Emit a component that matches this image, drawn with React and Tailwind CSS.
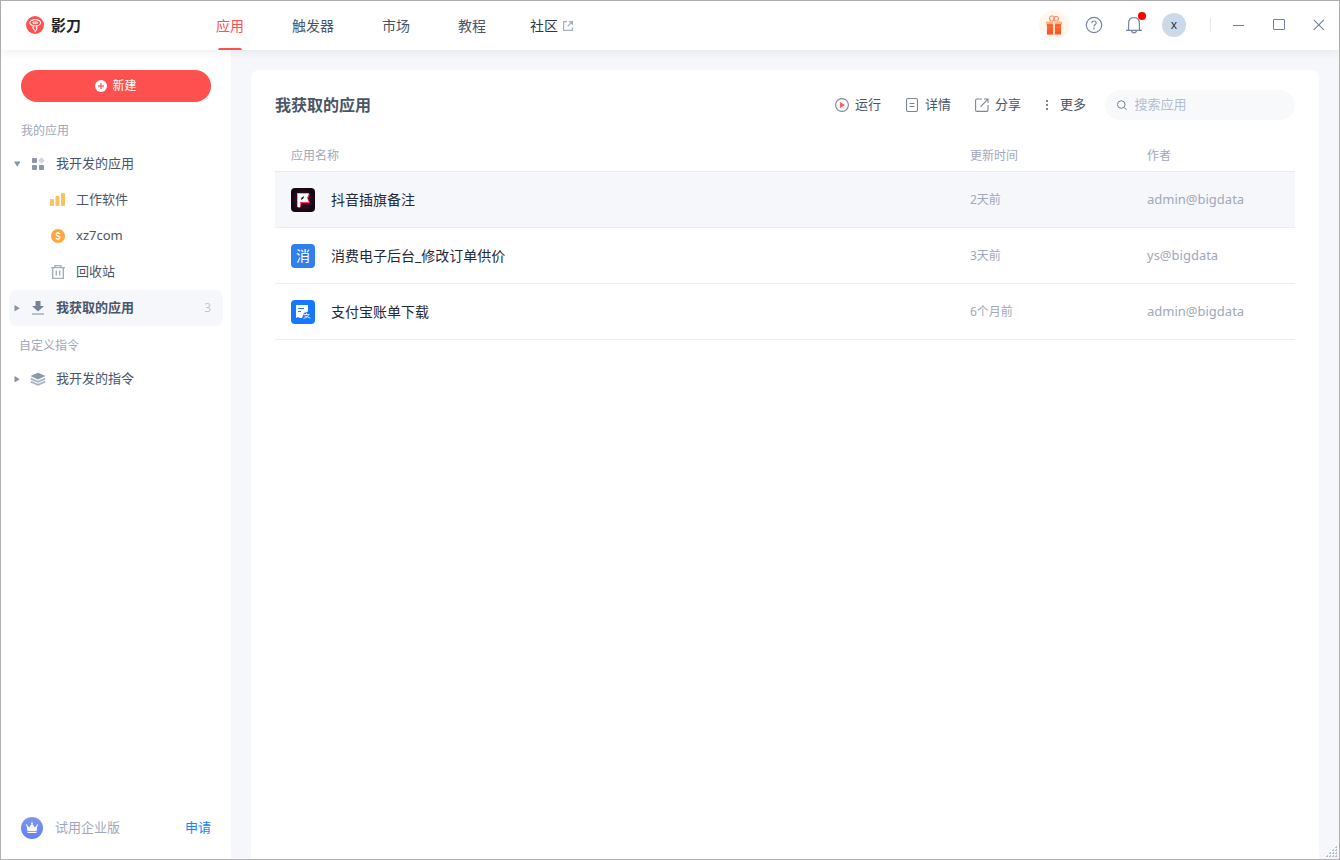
import { useState } from "react";

const navItems = ["应用", "触发器", "市场", "教程"];

const apps = [
  { name: "抖音插旗备注", updated: "2天前", author: "admin@bigdata", Icon: FlagAppIcon },
  { name: "消费电子后台_修改订单供价", updated: "3天前", author: "ys@bigdata", Icon: TextAppIcon },
  { name: "支付宝账单下载", updated: "6个月前", author: "admin@bigdata", Icon: BillAppIcon },
];

function LogoIcon() {
  return (
    <svg width="18" height="18" viewBox="0 0 18 18" fill="none">
      <circle cx="9" cy="9" r="9" fill="#ff4f4f" />
      <ellipse cx="9.2" cy="6.800" rx="5.400" ry="3.200" stroke="#fff" strokeWidth="1.100" />
      <rect x="6.800" y="6" width="4.800" height="1.600" rx=".8" fill="#ff8a8a" stroke="#fff" strokeWidth=".9" />
      <path d="M7 10v1.800c0 1 1 1.300 1.400 2.200M10.900 10.200c.3 2-.4 4-1.800 5.400" stroke="#fff" strokeWidth="1.200" strokeLinecap="round" />
    </svg>
  );
}

function ExternalIcon() {
  return (
    <svg width="10" height="10" viewBox="0 0 10 10" fill="none" stroke="#a3afc2" strokeWidth="1.300">
      <path d="M4 .6H.6v8.800h8.800V6.500M6 .6h3.400V4M9.200.8 4.600 5.400" />
    </svg>
  );
}

function GiftIcon() {
  return (
    <svg width="16" height="20" viewBox="0 0 16 20" fill="none">
      <defs>
        <linearGradient id="giftBox" x1="0" y1="0" x2="0" y2="1">
          <stop offset="0" stopColor="#ff7a3d" />
          <stop offset="1" stopColor="#ff4a1f" />
        </linearGradient>
      </defs>
      <rect x="3.600" y="1" width="4.600" height="5" rx="2" stroke="#ff8b66" strokeWidth="1.200" />
      <rect x="7.800" y="1.500" width="4.600" height="4.500" rx="2" stroke="#ff8b66" strokeWidth="1.200" />
      <rect x="1" y="8" width="14" height="11.500" fill="url(#giftBox)" />
      <rect x="0" y="6.500" width="16" height="3" rx=".5" fill="#ffb27a" />
      <rect x="1" y="9.500" width="14" height="1" fill="#f5401a" />
      <rect x="7" y="6.500" width="2" height="13" fill="#ffe3c7" />
    </svg>
  );
}

function HelpIcon() {
  return (
    <svg width="18" height="18" viewBox="0 0 18 18" fill="none" stroke="#7485a0" strokeWidth="1.200">
      <circle cx="9" cy="9" r="7.700" />
      <path d="M6.800 7.200c0-1.300.9-2.200 2.200-2.200s2.200.8 2.200 2c0 1.500-2.200 1.600-2.200 3.400" />
      <circle cx="9" cy="12.500" r=".3" />
    </svg>
  );
}

function BellIcon() {
  return (
    <svg width="16" height="18" viewBox="0 0 16 18" fill="none" stroke="#7485a0" strokeWidth="1.200">
      <path d="M2.600 14.200V7.400C2.600 3.800 4.800 1.600 8 1.600s5.400 2.200 5.400 5.800v6.800M0 14.400h16M5.600 14.600c.2 1.400 1.100 2.200 2.400 2.200s2.200-.8 2.400-2.200" />
    </svg>
  );
}

function MinimizeIcon() {
  return (
    <svg width="12" height="12" viewBox="0 0 12 12" stroke="#6f819b">
      <path d="M0 6.500h11" />
    </svg>
  );
}

function MaximizeIcon() {
  return (
    <svg width="12" height="12" viewBox="0 0 12 12" fill="none" stroke="#6f819b">
      <rect x=".5" y=".5" width="11" height="10" rx=".5" />
    </svg>
  );
}

function CloseIcon() {
  return (
    <svg width="12" height="12" viewBox="0 0 12 12" stroke="#6f819b" strokeWidth="1.100">
      <path d="M.8.8l10 10M10.800.8l-10 10" />
    </svg>
  );
}

function PlusIcon() {
  return (
    <svg width="12" height="12" viewBox="0 0 12 12">
      <circle cx="6" cy="6" r="6" fill="#fff" />
      <path d="M6 3v6M3 6h6" stroke="#ff6a6a" strokeWidth="1.300" />
    </svg>
  );
}

function Arrow({ open }) {
  return (
    <svg className="shrink-0" width="6" height="6" viewBox="0 0 6 6" fill="#8593a8">
      {open ? <path d="M0 .5h6.500L3.200 5.800z" /> : <path d="M.5 0v6.500l5.300-3.200z" />}
    </svg>
  );
}

function GridIcon() {
  return (
    <svg width="14" height="14" viewBox="0 0 14 14" fill="#8a98ad">
      <rect x="1" y="1" width="5" height="5" rx="1" />
      <rect x="1" y="8" width="5" height="5" rx="1" />
      <rect x="8" y="8" width="5" height="5" rx="1" />
      <path d="M10.500.2l3.300 3.300-3.300 3.300-3.300-3.300z" fill="#d0d6e0" />
    </svg>
  );
}

function BarsIcon() {
  return (
    <svg width="16" height="16" viewBox="0 0 16 16" fill="#f9c263">
      <rect x="0" y="7" width="4" height="7" rx=".8" />
      <rect x="5.500" y="4" width="4" height="10" rx=".8" />
      <rect x="11" y="1" width="4" height="13" rx=".8" />
    </svg>
  );
}

function CoinIcon() {
  return (
    <svg width="16" height="16" viewBox="0 0 16 16" fill="none">
      <circle cx="8" cy="8" r="7" fill="#ffa63f" />
      <path d="M10 6.200C9.800 5.300 9 5 8 5s-1.900.4-1.900 1.400C6.100 8.500 10 7.500 10 9.600c0 1-.9 1.500-2 1.500s-1.900-.5-2-1.400M8 4v1M8 11v1.200" stroke="#fff" strokeWidth="1.300" />
    </svg>
  );
}

function TrashIcon() {
  return (
    <svg width="16" height="16" viewBox="0 0 16 16" fill="none" stroke="#a4adb9" strokeWidth="1.400">
      <path d="M1 3.600h14M5 3.400V1.600h6v1.800M2.700 3.600v10.800h10.600V3.600M6.300 6.500v5M9.700 6.500v5" />
    </svg>
  );
}

function DownloadIcon() {
  return (
    <svg width="14" height="14" viewBox="0 0 14 14">
      <path d="M4.500 0h5v5H13l-6 5.500L1 5h3.500z" fill="#74839a" />
      <rect x="1" y="12" width="12" height="2" fill="#b7c0cd" />
    </svg>
  );
}

function LayersIcon() {
  return (
    <svg width="16" height="14" viewBox="0 0 16 14">
      <path d="M8 .8l7.500 3.300L8 7.500.5 4.100z" fill="#8a98ad" />
      <path d="M.8 6.600L8 9.800l7.200-3.200M.8 9.600L8 12.800l7.200-3.200" fill="none" stroke="#a7b2c2" strokeWidth="1.700" />
    </svg>
  );
}

function CrownIcon() {
  return (
    <svg width="22" height="22" viewBox="0 0 22 22">
      <defs>
        <linearGradient id="crown" x1="0" y1="0" x2="0" y2="1">
          <stop offset="0" stopColor="#7d96ef" />
          <stop offset="1" stopColor="#6480f4" />
        </linearGradient>
      </defs>
      <circle cx="11" cy="11" r="11" fill="url(#crown)" />
      <path d="M5.500 8l2.900 2.300L11 6.200l2.600 4.100L16.500 8l-.9 6H6.400z" fill="#fff" />
      <rect x="6.500" y="14.800" width="9" height="1.200" fill="#fff" />
      <circle cx="11" cy="6.200" r=".9" fill="#fff" />
      <circle cx="5.600" cy="8" r=".8" fill="#fff" />
      <circle cx="16.400" cy="8" r=".8" fill="#fff" />
    </svg>
  );
}

function RunIcon() {
  return (
    <svg width="14" height="14" viewBox="0 0 14 14" fill="none">
      <circle cx="7" cy="7" r="6.400" stroke="#7d8696" strokeWidth="1.100" />
      <path d="M5 4v6l5-3z" fill="#ff5a5f" />
    </svg>
  );
}

function DetailIcon() {
  return (
    <svg width="14" height="14" viewBox="0 0 14 14" fill="none" stroke="#7d8696" strokeWidth="1.100">
      <rect x="1.500" y=".5" width="11" height="13" rx="1.500" />
      <path d="M4.500 5.500h5M4.500 8.500h5" />
    </svg>
  );
}

function ShareIcon() {
  return (
    <svg width="14" height="14" viewBox="0 0 14 14" fill="none" stroke="#7d8696" strokeWidth="1.100">
      <path d="M7 1H2a1.400 1.400 0 0 0-1.400 1.400v9.600A1.400 1.400 0 0 0 2 13.400h9.600A1.400 1.400 0 0 0 13 12V7M9 1h4v4M12.800 1.200 5.500 8.800" />
    </svg>
  );
}

function MoreIcon() {
  return (
    <svg width="9" height="14" viewBox="0 0 9 14" fill="#7d8696">
      <path d="M1 2h2v2H1zM1 6h2v2H1zM1 10h2v2H1z" />
    </svg>
  );
}

function SearchIcon() {
  return (
    <svg width="13" height="13" viewBox="0 0 13 13" fill="none" stroke="#6b7a90" strokeWidth="1.200">
      <circle cx="5.300" cy="5.300" r="4.700" />
      <path d="M8.800 8.800l3.200 3.200" />
    </svg>
  );
}

function FlagAppIcon() {
  return (
    <svg className="shrink-0" width="24" height="24" viewBox="0 0 24 24">
      <defs>
        <radialGradient id="flagBg">
          <stop offset="0" stopColor="#4a1030" />
          <stop offset="1" stopColor="#150714" />
        </radialGradient>
      </defs>
      <rect width="24" height="24" rx="4" fill="url(#flagBg)" />
      <path d="M7 6h12l-2 4.500 2 4.500h-8.500L9 20H7z" fill="#ff2c55" />
      <path d="M6 5h12l-1.500 4h-3L9 14v5H6z" fill="#35d5d8" />
      <path d="M6.800 5.800h11l-1.800 4 1.800 4.200H9.200v5H6.800z" fill="#fff" />
      <path d="M9.800 12l.8-2.600L13.200 8l-1 2.800z" fill="#2a0a1e" />
    </svg>
  );
}

function TextAppIcon() {
  return (
    <span className="flex size-6 shrink-0 items-center justify-center rounded-sm bg-[#2f80ed] text-sm leading-6 text-white">
      消
    </span>
  );
}

function BillAppIcon() {
  return (
    <svg className="shrink-0" width="24" height="24" viewBox="0 0 24 24" fill="none">
      <rect width="24" height="24" rx="4" fill="#1677ff" />
      <path d="M5 5h12v6.500l-4 1.500-2 5H9l-2-1-2 1z" fill="#fff" />
      <path d="M7 8.500h6M7 11.500h3" stroke="#1677ff" strokeWidth="1.200" />
      <path d="M12.500 14.500h6M15.500 12.800v1.700M17.500 14.800c-.5 2-2.500 3.400-5 3.400M13.500 16c2 .3 4 1.400 6 2.200" stroke="#d6e6ff" />
    </svg>
  );
}

function Header() {
  return (
    <header className="relative z-10 flex h-[49px] shrink-0 bg-white shadow-[0_2px_10px_rgba(0,0,0,0.07)]">
      <div className="flex w-[215px] shrink-0 items-center gap-[7px] pb-px pl-[25px] text-[15px] font-bold text-[#1f2329]">
        <LogoIcon />
        影刀
      </div>
      <nav className="flex gap-12 text-sm text-[#4a5568]">
        {navItems.map((item, i) => (
          <a
            key={item}
            href="#"
            className={i === 0 ? "relative flex items-center text-[#ff4f4f]" : "flex items-center"}
          >
            {item}
            {i === 0 && <span className="absolute inset-x-[2px] bottom-0 h-[2px] rounded-t-sm bg-[#ff4f4f]" />}
          </a>
        ))}
        <a href="#" className="-ml-1 flex items-center gap-[5px] text-[#2d3748]">
          社区
          <ExternalIcon />
        </a>
      </nav>
      <div className="ml-auto flex items-center pb-px">
        <button aria-label="礼物" className="flex w-10 justify-center">
          <span className="flex size-[30px] items-center justify-center rounded-full bg-[#fff6ec]">
            <GiftIcon />
          </span>
        </button>
        <button aria-label="帮助" className="flex w-10 justify-center">
          <HelpIcon />
        </button>
        <button aria-label="通知" className="relative flex w-10 justify-center">
          <BellIcon />
          <span className="absolute -top-1 right-2 size-2 rounded-full bg-[#ff0000]" />
        </button>
        <button className="flex w-10 justify-center">
          <span className="flex size-6 items-center justify-center rounded-full bg-[#cbd9e8] text-xs leading-6 text-[#2d3748]">
            x
          </span>
        </button>
        <span className="mr-2 ml-4 h-[14px] w-px bg-[#e2e6ee]" />
        <button aria-label="最小化" className="flex w-10 justify-center">
          <MinimizeIcon />
        </button>
        <button aria-label="最大化" className="flex w-10 justify-center">
          <MaximizeIcon />
        </button>
        <button aria-label="关闭" className="flex w-10 justify-center">
          <CloseIcon />
        </button>
      </div>
    </header>
  );
}

function TreeItem({ icon, label, open, active, count }) {
  return (
    <button
      className={
        active
          ? "flex h-9 w-full items-center rounded-lg bg-[#f6f7fb] px-[5px] pr-3 font-bold"
          : "flex h-9 w-full items-center px-[5px]"
      }
    >
      <Arrow open={open} />
      <span className="mr-[9px] ml-[9px] flex w-[18px] justify-center">{icon}</span>
      {label}
      {count && <span className="ml-auto text-xs font-normal text-[#c3c9d6]">{count}</span>}
    </button>
  );
}

function SubItem({ icon, label }) {
  return (
    <button className="flex h-9 w-full items-center gap-[10px] pl-[41px]">
      {icon}
      {label}
    </button>
  );
}

function Sidebar() {
  return (
    <aside className="flex w-[230px] shrink-0 flex-col bg-white pt-5">
      <button className="mx-5 flex h-8 items-center justify-center gap-[5px] rounded-full bg-[#ff5050] text-xs text-white">
        <PlusIcon />
        新建
      </button>
      <div className="px-2 text-[13px] text-[#4a5568]">
        <h2 className="mt-[21px] mb-[7px] pl-3 text-xs leading-4 text-[#a0a8ba]">我的应用</h2>
        <TreeItem icon={<GridIcon />} label="我开发的应用" open />
        <SubItem icon={<BarsIcon />} label="工作软件" />
        <SubItem icon={<CoinIcon />} label="xz7com" />
        <SubItem icon={<TrashIcon />} label="回收站" />
        <TreeItem icon={<DownloadIcon />} label="我获取的应用" active count={3} />
        <h2 className="mt-3 mb-[7px] pl-[10px] text-xs leading-4 text-[#a0a8ba]">自定义指令</h2>
        <TreeItem icon={<LayersIcon />} label="我开发的指令" />
      </div>
      <div className="mx-5 mt-auto mb-5 flex items-center text-[13px] text-[#a0a8ba]">
        <CrownIcon />
        <span className="ml-3">试用企业版</span>
        <a href="#" className="ml-auto text-[#1683ff]">申请</a>
      </div>
    </aside>
  );
}

function ToolButton({ icon, label }) {
  return (
    <button className="flex items-center gap-[6px]">
      {icon}
      {label}
    </button>
  );
}

function AppTable() {
  return (
    <table className="mt-5 w-full table-fixed border-separate border-spacing-0 text-left text-xs text-[#a0a8ba]">
      <thead>
        <tr>
          <th className="h-8 border-b border-[#e8ebf1] px-4 font-normal">应用名称</th>
          <th className="h-8 w-[177px] border-b border-[#e8ebf1] px-4 font-normal">更新时间</th>
          <th className="h-8 w-[164px] border-b border-[#e8ebf1] px-4 font-normal">作者</th>
        </tr>
      </thead>
      <tbody>
        {apps.map((app, i) => (
          <tr key={app.name} className={i === 0 ? "bg-[#f6f7fb]" : ""}>
            <td className="h-14 border-b border-[#ebedf0] px-4 pt-px">
              <div className="flex items-center gap-4 text-sm text-[#1f2937]">
                <app.Icon />
                {app.name}
              </div>
            </td>
            <td className="h-14 border-b border-[#ebedf0] px-4 pt-px">{app.updated}</td>
            <td className="h-14 border-b border-[#ebedf0] px-4 pt-px text-[13px]">{app.author}</td>
          </tr>
        ))}
      </tbody>
    </table>
  );
}

export default function App() {
  const [query, setQuery] = useState("");

  return (
    <div className="relative flex min-h-screen flex-col border border-[#b0b0b0] bg-[#f6f7fb] font-['Noto_Sans','Noto_Sans_CJK_SC',sans-serif]">
      <Header />
      <div className="flex grow">
        <Sidebar />
        <main className="mx-5 mt-5 grow rounded-t-lg bg-white px-6 pt-5">
          <div className="flex h-[30px] items-center">
            <h1 className="text-base font-bold text-[#4a5568]">我获取的应用</h1>
            <div className="ml-auto flex gap-6 text-[13px] text-[#4a5568]">
              <ToolButton icon={<RunIcon />} label="运行" />
              <ToolButton icon={<DetailIcon />} label="详情" />
              <ToolButton icon={<ShareIcon />} label="分享" />
              <ToolButton icon={<MoreIcon />} label="更多" />
            </div>
            <label className="ml-[19px] flex h-[30px] w-[190px] items-center gap-[7px] rounded-full bg-[#f8f9fb] px-3">
              <SearchIcon />
              <input
                type="text"
                aria-label="搜索应用"
                placeholder="搜索应用"
                value={query}
                onChange={(e) => setQuery(e.target.value)}
                className="min-w-0 grow bg-transparent text-[13px] text-[#4a5568] outline-none placeholder:text-[#b3bdd2]"
              />
            </label>
          </div>
          <AppTable />
        </main>
      </div>
      <svg className="absolute right-[2px] bottom-[2px]" width="12" height="12" viewBox="0 0 12 12" fill="#b4bfd4">
        <path d="M11 1h1v1h-1zM10 2h2v1h-2zM11 4h1v1h-1zM10 5h2v1h-2zM8 4h1v1H8zM7 5h2v1H7zM11 7h1v1h-1zM10 8h2v1h-2zM8 7h1v1H8zM7 8h2v1H7zM5 7h1v1H5zM4 8h2v1H4zM11 10h1v1h-1zM10 11h2v1h-2zM8 10h1v1H8zM7 11h2v1H7zM5 10h1v1H5zM4 11h2v1H4zM2 10h1v1H2zM1 11h2v1H1z" />
      </svg>
    </div>
  );
}
